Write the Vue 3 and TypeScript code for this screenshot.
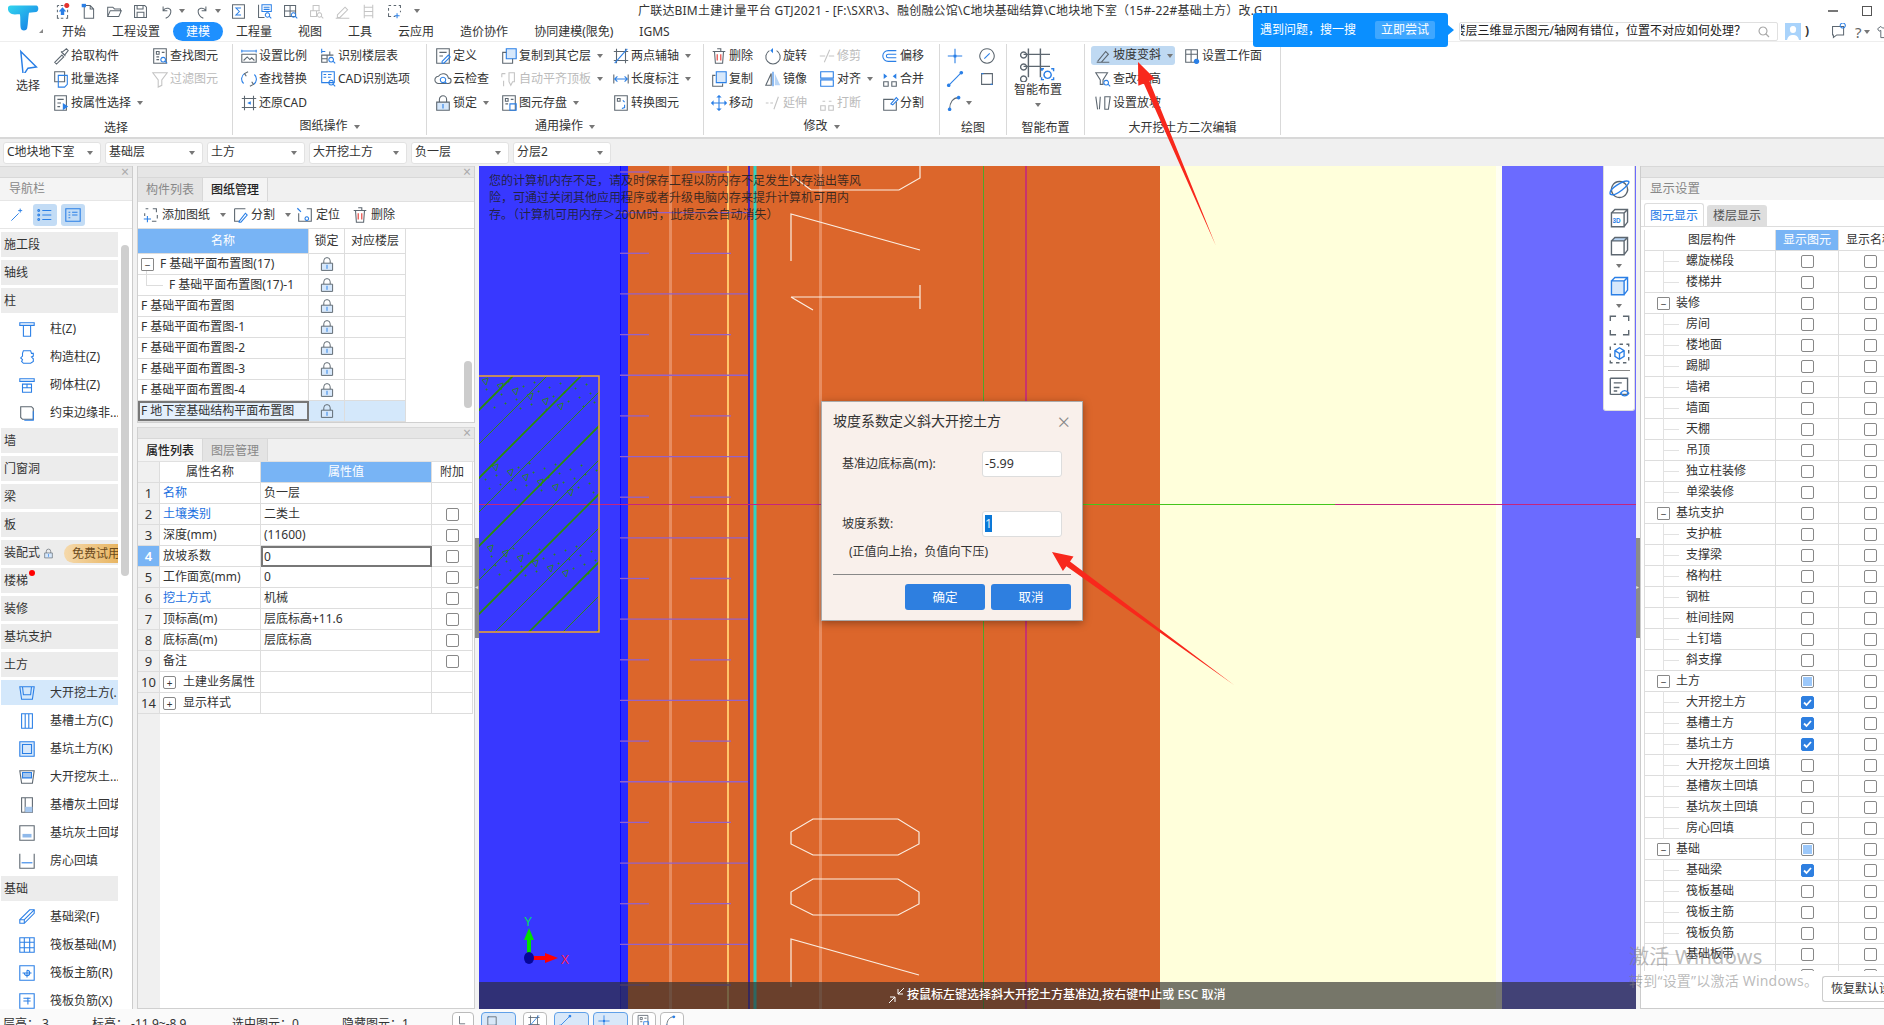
<script setup lang="ts">
import { h } from 'vue';

const D = '#5d6770';
const B = '#2a7fe6';
const G = '#c4c4c4';
const R = '#e5322d';
const Q: [string, string] = ['M13.5 11.5a2.6 2.6 0 1 0 .01 0zM15.6 15.8l2.4 2.4', B];

// 图标路径，颜色前带 = 的是填充
const icons: Record<string, [string, string][]> = {
  upload: [['M4 3h2M8 3h3M14 3h2v2M16 8v3M16 14v4h-2M11 18H8M6 18H4v-4M4 11V8M4 5V3', D], ['M10 5l4.5 5H12v4H8v-4H5.5z', '=' + B], ['M15 0a3 3 0 1 0 .01 0z', '=' + R]],
  newf: [['M5 3h7l4 4v11H5zM12 3v4h4', D], ['M2 1h5v4H2z', '=' + B]],
  open: [['M2 16V5h6l2 2h7v3M2 16l3-7h13l-3 7z', D]],
  save: [['M3 3h12l2 2v12H3zM6 3v4h7V3M6 17v-6h8v6', D]],
  undo: [['M6 9C9 4 16 6 15 11s-4 6-6 7M6 4v5h5', D]],
  redo: [['M14 9C11 4 4 6 5 11s4 6 6 7M14 4v5H9', D]],
  sigma: [['M3 2h14v16H3z', D], ['M13 6H7l4 4-4 4h6', B]],
  chartq: [['M3 2v15h7', D], ['M7 2h11v8H7zM9 5h7M9 7.5h7', B], Q],
  gridq: [['M3 3h13v13H3zM3 9.5h13M9.5 3v13', D], Q],
  gridg: [['M6 3h7v6H6zM3 9h7v7H3zM10 9h4M6 3v6', G], ['M13.5 11.5a2.6 2.6 0 1 0 .01 0zM15.6 15.8l2.4 2.4', G]],
  peng: [['M4 14l9-9 3 3-9 9H4zM2 18h16', G]],
  colg: [['M5 2v16M15 2v16M5 5h10M5 10h10M5 15h10', G]],
  frame: [['M3 3h3M9 3h3M15 3h2v3M17 9v2M3 6v3M3 12v4h3M9 16h2', D], ['M13 12v6M10 15h6', B]],
  arrow: [['M4 2l13 13-7 1-4 6z', B]],
  pick: [['M3 17l8-8 2 2-8 8zM11 6l5-4 2 2-4 5M10 5l5 5', D]],
  batch: [['M3 2h11v11H3z', D], ['M7 6h10v10l-3 3H7z', B]],
  attr: [['M3 2h13v16H3zM6 6h7M6 10h4M6 14h3', D], ['M12 10l6 4-6 4z', '=' + B]],
  findel: [['M3 2h14v16H3zM6 5h3v3H6zM12 6h3M6 11h3M6 14h3', D], Q],
  filter: [['M2 3h16l-6 8v6l-4 2v-8z', G]],
  scale: [['M2 3v3M18 3v3M2 4.500h16', B], ['M2 8h16v9H2zM4 15l4-4 3 3 2-2 3 3', D]],
  floorq: [['M3 2v5M3 5h4', B], ['M3 9h6v8H3zM9 9h7M12 5v4M3 13h6', D], Q],
  replace: [['M5 4a7 7 0 0 0-1 11M15 16a7 7 0 0 0 1-11', B], ['M9 2L5 4l2 3M11 18l4-2-2-3', D]],
  cad: [['M3 2h14v12H3z', B], ['M5 5h3M5 8h3M10 5h4M10 8h3', B], Q],
  restore: [['M2 5h16M2 15h16M5 2v16M15 2v16', D], ['M12 8l-4 2 4 2z', '=' + B]],
  define: [['M3 2h14v16H3zM6 6h8M6 10h4', D], ['M9 16l7-7 2 2-7 7H9z', B]],
  cloud: [['M5 15a4 4 0 0 1 0-8 6 6 0 0 1 11 2 3 3 0 0 1 0 6z', D], ['M10 8a3 3 0 1 0 .01 0zM12 13l2 2', B]],
  lock: [['M6 9V6a4 4 0 0 1 8 0v3', D], ['M3 9h14v9H3z', '=#d7e8fb'], ['M3 9h14v9H3z', D], ['M10 11v5', B]],
  copyf: [['M7 2h11v11H7z', '=#d7e8fb'], ['M7 2h11v11H7z', B], ['M7 6H3v12h11v-5', D]],
  alignt: [['M2 4h4M2 4v4M4 12v6', G], ['M10 3h6v10h-2l-2 4-2-4z', G]],
  store: [['M3 2h14v16H3zM6 5h3v3H6zM12 6h3M6 11h3', D], ['M11 11h7v7h-7z', B]],
  twop: [['M5 2v16M15 2v16M2 5h16M2 15h16', D], ['M3 18L17 2', B]],
  len: [['M2 5v10M18 5v10', D], ['M3 10h14M6 7l-3 3 3 3M14 7l3 3-3 3', B]],
  conv: [['M3 2h14v16H3zM6 5h3v3H6z', D], ['M12 7l2 2M14 12v3l-3 1', B]],
  del: [['M3 5h14M8 2h4v3M5 5l1 13h8l1-13', D], ['M8 8v7M12 8v7', R]],
  rotate: [['M6 4a8 8 0 1 0 8 0', D], ['M10 1l-3 3 3 3', '=' + B]],
  trim: [['M2 10h6M12 10h6M13 3L7 17', G]],
  offset: [['M17 4H8a6 6 0 0 0 0 12h9M17 8H8a2 2 0 0 0 0 4h9', B]],
  copy: [['M7 2h11v12H7z', '=#d7e8fb'], ['M7 2h11v12H7z', B], ['M6 6H3v12h11v-3', D]],
  mirror: [['M10 2v16', B], ['M8 4L2 17h6z', D], ['M12 4l6 13h-6z', '=#b7d4f5']],
  align: [['M3 2h14v7H3z', B], ['M3 11h14v7H3z', B]],
  merge: [['M3 13h5v5H3zM12 13h5v5h-5z', D], ['M3 4l4 3-4 3zM17 4l-4 3 4 3z', '=' + B]],
  move: [['M10 2v16M2 10h16', B], ['M10 1l-3 3h6zM10 19l-3-3h6zM1 10l3-3v6zM19 10l-3-3v6z', '=' + B]],
  extend: [['M2 10h3M7 10h3M16 3l-5 14', G]],
  brk: [['M3 13h5v5H3zM12 13h5v5h-5zM5 8h3M12 8h3', G]],
  split: [['M14 6H3v12h14V9', D], ['M11 11l6-7 2 2-6 6z', B]],
  point: [['M10 2v6M10 12v6M2 10h6M12 10h6', B], ['M10 8a2 2 0 1 0 .01 0z', '=' + B]],
  gauge: [['M10 2a8 8 0 1 0 .01 0z', D], ['M7 13l6-6', B]],
  line: [['M3 17L17 3', B], ['M3 15a2 2 0 1 0 .01 0zM17 1a2 2 0 1 0 .01 0z', '=' + B]],
  rect: [['M4 4h12v12H4z', D], ['M4 4h2M14 16h2', B]],
  arc: [['M4 17C4 9 8 4 14 4', D], ['M14 2a2 2 0 1 0 .01 0zM4 15a2 2 0 1 0 .01 0z', '=' + B]],
  smart: [['M7 2v24M17 2v24M3 7h22M3 17h22', D], ['M3 5a2.500 2.500 0 1 0 .01 0zM3 15a2.500 2.500 0 1 0 .01 0zM3 25a2.500 2.500 0 1 0 .01 0z', D], ['M19 20h-1v-1h2M26 19h2v2M28 26v2h-2M20 28h-2v-2', B], ['M23 21a3 3 0 1 0 .01 0z', B]],
  slope: [['M3 17h14M4 16l9-11 3 3-8 9', D]],
  work: [['M3 3h13v14H3zM3 8h13M9 3v14', D], ['M15 13a3 3 0 1 0 .01 0z', '=' + B]],
  hgt: [['M2 3h13l-5 8v5H7v-5z', D], Q],
  grade: [['M2 3l2 14M7 3l-1 14M12 3h6l-2 14h-4z', D]],
  addd: [['M4 3h3M12 3h4v4M17 10v4M16 17h-5M3 8v3', D], ['M6 11v7M2 14.500h8', B]],
  splitd: [['M4 3h12M4 3v14h6', D], ['M9 17l7-9 2 2-7 8H9z', B]],
  locate: [['M12 3h5v14H3V8', D], ['M2 2l4 4-1 1-4-4z', '=' + B], ['M12 12a2 2 0 1 0 .01 0z', B]],
  wand: [['M3 17L12 8', B], ['M14 2v5M11.500 4.500h5', B]],
  tlist: [['M3 4a1 1 0 1 0 .01 0zM3 9a1 1 0 1 0 .01 0zM3 14a1 1 0 1 0 .01 0zM7 5h10M7 10h10M7 15h10', B]],
  tcard: [['M2 3h16v14H2zM5 7h2M9 7h6M5 10h2M9 10h6M5 13h2', B]],
  nz: [['M2 3h16v3H2zM4 6h12M6 6v12h8V6', B]],
  ngz: [['M6 3h8l1 3h2v3l-2 1 2 2v3l-3 2H6l-2-2 1-2-2-2 2-2V6z', B]],
  nqz: [['M2 3h16v3H2zM4 6h12M5 9h10v9H5zM5 13h10M10 9v4', B]],
  nby: [['M3 3h12l2 2v12H5l-2-2z', D], ['M17 8v10H7', B]],
  nsoil: [['M2 3h16l-2 14H4zM5 3l1 9h8l1-9', B]],
  ncao: [['M4 2h12v16H4zM8 2v16M12 2v16', B]],
  nkeng: [['M2 2h16v16H2z', '=#d7e8fb'], ['M2 2h16v16H2z', B], ['M5 5h10v10H5z', B]],
  nash: [['M2 3h16l-2 14H4z', D], ['M5 5h10v6H5z', '=#a7c8ef'], ['M5 5h10v6H5z', B]],
  nash2: [['M4 2h12v16H4zM8 2v16', D], ['M8 12h8v6H8z', '=#a7c8ef']],
  nash3: [['M2 2h16v16H2z', D], ['M5 11h10v4H5z', '=#8fb9ea']],
  nfang: [['M2 2v16h16V2', D], ['M4 12h12', B]],
  nbeam: [['M2 13l11-11h5v4L7 17H2z', B], ['M2 13h5v4M7 13L18 2', B]],
  nraft: [['M2 2h16v16H2zM2 7h16M2 13h16M7 2v16M13 2v16', B]],
  nbar: [['M2 2h16v16H2z', B], ['M5 10h10M10 7a3 3 0 1 1-3 3M10 7v8', B]],
  nbar2: [['M2 2h16v16H2z', B], ['M6 7h8M6 10h8M11 6v8', B]],
  orbit: [['M10 3a7 7 0 1 0 .01 0z', D], ['M2 14C0 10 14 1 18 3c2 2-12 14-16 11z', B]],
  cube3d: [['M3 6h11v12H3zM3 6l3-3h11v11l-3 4M14 6l3-3', D]],
  cubet: [['M3 6l3-3h11l-3 3z', '=#b7d4f5'], ['M3 6h11v12H3zM3 6l3-3h11v11l-3 4M14 6l3-3', D]],
  cubeb: [['M3 6h11v12H3z', '=#d7e8fb'], ['M3 6h11v12H3zM3 6l3-3h11v11l-3 4M14 6l3-3', B]],
  corners: [['M2 6V2h5M13 2h5v4M18 14v4h-5M7 18H2v-4', D]],
  boxd: [['M5 2h2M10 2h3M16 2h2v2M18 7v3M18 13v3M16 18h-3M10 18H7M4 18H2v-2M2 13v-3M2 7V4', D], ['M10 5l4 2.500v5L10 15l-4-2.500v-5zM6 7.500l4 2.500 4-2.500M10 10v5', B]],
  listeye: [['M2 2h15v14H2M2 16V2M5 6h7M5 10h5M5 13h3', D], ['M11 15c2-3 5-3 7 0-2 3-5 3-7 0z', B]],
  chat: [['M3 4h13v10H8l-4 3v-3H3z', D], ['M15 0a3 3 0 1 0 .01 0z', B]],
  shirt: [['M6 3l-4 3 2 3 2-1v9h8V8l2 1 2-3-4-3-2 2H8z', D]],
  sl: [['M5 3v11h8', D]],
};

const Ico = (props: { n: string; s?: number; vb?: number }) => {
  const size = props.s ?? 18;
  const vb = props.vb ?? 20;
  const kids = (icons[props.n] ?? []).map(([d, c]) =>
    c[0] === '='
      ? h('path', { d, fill: c.slice(1) })
      : h('path', { d, fill: 'none', stroke: c, 'stroke-width': 1.2 })
  );
  if (props.n === 'cube3d') {
    kids.push(h('text', { x: 4, y: 15, 'font-size': 5.5, 'font-weight': 700, fill: B, 'font-family': 'Liberation Sans, sans-serif' }, '3D'));
  }
  return h('svg', { class: 'ico', width: size, height: size, viewBox: `0 0 ${vb} ${vb}` }, kids);
};

const qa = ['upload', 'newf', 'open', 'save', 'undo', 'redo', 'sigma', 'chartq', 'gridq', 'gridg', 'peng', 'colg', 'frame'];
const tabs = ['开始', '工程设置', '建模', '工程量', '视图', '工具', '云应用', '造价协作', '协同建模(限免)', 'IGMS'];

interface RItem { t: string; i: string; off?: boolean; car?: boolean; on?: boolean }
const it = (t: string, i: string, opt: Partial<RItem> = {}): RItem => ({ t, i, ...opt });

const gSel: RItem[][] = [
  [it('拾取构件', 'pick'), it('批量选择', 'batch'), it('按属性选择', 'attr', { car: true })],
  [it('查找图元', 'findel'), it('过滤图元', 'filter', { off: true })],
];
const gDwg: RItem[][] = [
  [it('设置比例', 'scale'), it('查找替换', 'replace'), it('还原CAD', 'restore')],
  [it('识别楼层表', 'floorq'), it('CAD识别选项', 'cad')],
];
const gCom: RItem[][] = [
  [it('定义', 'define'), it('云检查', 'cloud'), it('锁定', 'lock', { car: true })],
  [it('复制到其它层', 'copyf', { car: true }), it('自动平齐顶板', 'alignt', { off: true, car: true }), it('图元存盘', 'store', { car: true })],
  [it('两点辅轴', 'twop', { car: true }), it('长度标注', 'len', { car: true }), it('转换图元', 'conv')],
];
const gMod: RItem[][] = [
  [it('删除', 'del'), it('复制', 'copy'), it('移动', 'move')],
  [it('旋转', 'rotate'), it('镜像', 'mirror'), it('延伸', 'extend', { off: true })],
  [it('修剪', 'trim', { off: true }), it('对齐', 'align', { car: true }), it('打断', 'brk', { off: true })],
  [it('偏移', 'offset'), it('合并', 'merge'), it('分割', 'split')],
];
const gEdit: RItem[][] = [
  [it('坡度变斜', 'slope', { car: true, on: true }), it('查改标高', 'hgt'), it('设置放坡', 'grade')],
  [it('设置工作面', 'work')],
];
const selects = ['C地块地下室', '基础层', '土方', '大开挖土方', '负一层', '分层2'];

interface Nav { t: string; i?: string; on?: boolean }
const nav: Nav[] = [
  { t: '施工段' }, { t: '轴线' }, { t: '柱' },
  { t: '柱(Z)', i: 'nz' }, { t: '构造柱(Z)', i: 'ngz' }, { t: '砌体柱(Z)', i: 'nqz' }, { t: '约束边缘非...', i: 'nby' },
  { t: '墙' }, { t: '门窗洞' }, { t: '梁' }, { t: '板' }, { t: '装配式' }, { t: '楼梯' }, { t: '装修' }, { t: '基坑支护' }, { t: '土方' },
  { t: '大开挖土方(.', i: 'nsoil', on: true }, { t: '基槽土方(C)', i: 'ncao' }, { t: '基坑土方(K)', i: 'nkeng' },
  { t: '大开挖灰土...', i: 'nash' }, { t: '基槽灰土回填', i: 'nash2' }, { t: '基坑灰土回填', i: 'nash3' }, { t: '房心回填', i: 'nfang' },
  { t: '基础' }, { t: '基础梁(F)', i: 'nbeam' }, { t: '筏板基础(M)', i: 'nraft' }, { t: '筏板主筋(R)', i: 'nbar' }, { t: '筏板负筋(X)', i: 'nbar2' },
];

const dwg = ['F 基础平面布置图', 'F 基础平面布置图-1', 'F 基础平面布置图-2', 'F 基础平面布置图-3', 'F 基础平面布置图-4'];

interface Prop { n: string; k: string; v: string; link?: boolean; box?: boolean; add?: boolean; cur?: boolean }
const props2: Prop[] = [
  { n: '1', k: '名称', v: '负一层', link: true },
  { n: '2', k: '土壤类别', v: '二类土', link: true, box: true },
  { n: '3', k: '深度(mm)', v: '(11600)', box: true },
  { n: '4', k: '放坡系数', v: '0', box: true, cur: true },
  { n: '5', k: '工作面宽(mm)', v: '0', box: true },
  { n: '6', k: '挖土方式', v: '机械', link: true, box: true },
  { n: '7', k: '顶标高(m)', v: '层底标高+11.6', box: true },
  { n: '8', k: '底标高(m)', v: '层底标高', box: true },
  { n: '9', k: '备注', v: '', box: true },
  { n: '10', k: '土建业务属性', v: '', add: true },
  { n: '14', k: '显示样式', v: '', add: true },
];

// 0 未选 1 选中 2 半选
const tree: [string, number, number][] = [
  ['螺旋梯段', 1, 0], ['楼梯井', 1, 0], ['装修', 0, 0], ['房间', 1, 0], ['楼地面', 1, 0], ['踢脚', 1, 0], ['墙裙', 1, 0], ['墙面', 1, 0],
  ['天棚', 1, 0], ['吊顶', 1, 0], ['独立柱装修', 1, 0], ['单梁装修', 1, 0], ['基坑支护', 0, 0], ['支护桩', 1, 0], ['支撑梁', 1, 0],
  ['格构柱', 1, 0], ['钢桩', 1, 0], ['桩间挂网', 1, 0], ['土钉墙', 1, 0], ['斜支撑', 1, 0], ['土方', 0, 2], ['大开挖土方', 1, 1],
  ['基槽土方', 1, 1], ['基坑土方', 1, 1], ['大开挖灰土回填', 1, 0], ['基槽灰土回填', 1, 0], ['基坑灰土回填', 1, 0], ['房心回填', 1, 0],
  ['基础', 0, 2], ['基础梁', 1, 1], ['筏板基础', 1, 0], ['筏板主筋', 1, 0], ['筏板负筋', 1, 0], ['基础板带', 1, 0], ['', 1, 0],
];

const floatTools = [
  { i: 'orbit' }, { i: 'cube3d' }, { i: 'cubet', car: true }, { i: 'cubeb', car: true }, { i: 'corners' }, { i: 'boxd' },
];

const statusBtns = [
  { i: 'sl', w: 'w22' },
  { i: 'rect', w: 'w34', act: true, ml: true },
  { i: 'twop', w: 'w24', ml: true },
  { i: 'line', w: 'w34', act: true, ml: true },
  { i: 'point', w: 'w34', act: true },
  { i: 'store', w: 'w24' },
  { i: 'arc', w: 'w24' },
];

// 画布上的水平线，单双交替
const hLines = Array.from({ length: 21 }, (_, k) => ({ y: 172 + 40.65 * k, full: k % 2 === 1 }));
const hatch = Array.from({ length: 14 }, (_, k) => ({ c: 821 + 34 * k, w: k % 2 === 0 ? 1.6 : 0.9 }));
const marks = Array.from({ length: 90 }, (_, k) => ({
  x: 482 + ((k * 47) % 115),
  y: 380 + ((k * 83) % 248),
  big: k % 5 === 0,
}));
</script>

<template>
  <div class="app">
    <header class="head">
      <div class="logo">
        <svg width="31" height="28" viewBox="0 0 34 38" preserveAspectRatio="none">
          <defs>
            <linearGradient id="lg" x1="0" y1="0" x2="1" y2="1">
              <stop offset="0" stop-color="#33d6ee" />
              <stop offset="1" stop-color="#1276e6" />
            </linearGradient>
          </defs>
          <path d="M3 2h28c3 0 3 8 0 9l-8 1c-1 7-1 15-2 21-1 4-6 4-7 0-1-6 0-14-1-19-5 0-9 1-11-2-3-3-3-10 1-10z" fill="url(#lg)" />
        </svg>
        <i class="logo-tri"></i>
      </div>
      <div class="head-main">
        <div class="head-top">
          <div class="qa">
            <div v-for="q in qa" :key="q" class="qa-i">
              <Ico :n="q" :s="17" />
              <i v-if="q === 'undo' || q === 'redo'" class="car"></i>
            </div>
            <i class="car qa-more"></i>
          </div>
          <div class="title">广联达BIM土建计量平台 GTJ2021 - [F:\SXR\3、融创融公馆\C地块基础结算\C地块地下室（15#-22#基础土方）改.GTJ]</div>
          <div class="winbtn">
            <span class="w-min"></span>
            <span class="w-max"></span>
          </div>
        </div>
        <div class="head-tabs">
          <span v-for="t in tabs" :key="t" class="tab" :class="{ on: t === '建模' }">{{ t }}</span>
          <div class="head-right">
            <div class="search">
              <div class="search-t"><span>楼层三维显示图元/轴网有错位，位置不对应如何处理？</span></div>
              <svg width="14" height="14" viewBox="0 0 14 14"><path d="M6 2a4 4 0 1 0 .01 0zM9 9l3 3" fill="none" stroke="#aaa" stroke-width="1.2" /></svg>
            </div>
            <div class="avatar">
              <svg width="16" height="17" viewBox="0 0 16 17"><path d="M8 3a3 3 0 0 1 3 4c0 2-1 3-3 3S5 9 5 7a3 3 0 0 1 3-4zM2 17c1-4 3-5 6-5s5 1 6 5z" fill="#fff" /></svg>
            </div>
            <span class="moon">)</span>
            <Ico class="hr-chat" n="chat" :s="17" />
            <span class="help">?</span>
            <i class="car"></i>
            <Ico class="hr-shirt" n="shirt" :s="16" />
          </div>
        </div>
      </div>
    </header>

    <section class="ribbon">
      <div class="grp g1">
        <div class="cols">
          <div class="pick-big">
            <Ico n="arrow" :s="24" />
            <span>选择</span>
          </div>
          <div v-for="(c, ci) in gSel" :key="ci" class="col" :class="'c1' + ci">
            <div v-for="x in c" :key="x.t" class="rb" :class="{ off: x.off }"><Ico :n="x.i" /><span>{{ x.t }}</span><i v-if="x.car" class="car"></i></div>
          </div>
        </div>
        <div class="gl">选择</div>
      </div>
      <div class="grp g2">
        <div class="cols">
          <div v-for="(c, ci) in gDwg" :key="ci" class="col" :class="'c2' + ci">
            <div v-for="x in c" :key="x.t" class="rb" :class="{ off: x.off }"><Ico :n="x.i" /><span>{{ x.t }}</span><i v-if="x.car" class="car"></i></div>
          </div>
        </div>
        <div class="gl up">图纸操作 <i class="car"></i></div>
      </div>
      <div class="grp g3">
        <div class="cols">
          <div v-for="(c, ci) in gCom" :key="ci" class="col" :class="'c3' + ci">
            <div v-for="x in c" :key="x.t" class="rb" :class="{ off: x.off }"><Ico :n="x.i" /><span>{{ x.t }}</span><i v-if="x.car" class="car"></i></div>
          </div>
        </div>
        <div class="gl up">通用操作 <i class="car"></i></div>
      </div>
      <div class="grp g4">
        <div class="cols">
          <div v-for="(c, ci) in gMod" :key="ci" class="col" :class="'c4' + ci">
            <div v-for="x in c" :key="x.t" class="rb" :class="{ off: x.off }"><Ico :n="x.i" /><span>{{ x.t }}</span><i v-if="x.car" class="car"></i></div>
          </div>
        </div>
        <div class="gl up">修改 <i class="car"></i></div>
      </div>
      <div class="grp g5">
        <div class="draw">
          <Ico n="point" /><Ico n="gauge" /><Ico n="line" /><Ico n="rect" />
          <div class="draw-arc"><Ico n="arc" /><i class="car"></i></div>
        </div>
        <div class="gl">绘图</div>
      </div>
      <div class="grp g6">
        <div class="smart">
          <Ico n="smart" :s="36" :vb="30" />
          <span>智能布置</span>
          <i class="car"></i>
        </div>
        <div class="gl">智能布置</div>
      </div>
      <div class="grp g7">
        <div class="cols">
          <div v-for="(c, ci) in gEdit" :key="ci" class="col" :class="'c7' + ci">
            <div v-for="x in c" :key="x.t" class="rb" :class="{ on: x.on }"><Ico :n="x.i" /><span>{{ x.t }}</span><i v-if="x.car" class="car"></i></div>
          </div>
        </div>
        <div class="gl">大开挖土方二次编辑</div>
      </div>
    </section>

    <div class="bar">
      <div v-for="s in selects" :key="s" class="sel"><span>{{ s }}</span><i class="car"></i></div>
    </div>

    <main class="main">
      <aside class="nav">
        <div class="strip"><span class="x">×</span></div>
        <div class="nav-title">导航栏</div>
        <div class="nav-tools">
          <span class="nt"><Ico n="wand" :s="16" /></span>
          <span class="nt act"><Ico n="tlist" :s="18" /></span>
          <span class="nt act"><Ico n="tcard" :s="18" /></span>
        </div>
        <div class="nav-body">
          <div class="nav-list">
            <template v-for="n in nav" :key="n.t">
              <div v-if="n.i" class="sub" :class="{ on: n.on }"><Ico class="sub-i" :n="n.i" /><span>{{ n.t }}</span></div>
              <div v-else class="sec">
                <span>{{ n.t }}</span>
                <template v-if="n.t === '装配式'">
                  <Ico class="sec-lock" n="lock" :s="11" />
                  <em class="free">免费试用</em>
                </template>
                <b v-if="n.t === '楼梯'" class="dot"></b>
              </div>
            </template>
          </div>
          <div class="nav-sb"></div>
        </div>
      </aside>

      <div class="mid">
        <section class="pane top">
          <div class="strip"><span class="x">×</span></div>
          <div class="ptabs"><span class="pt">构件列表</span><span class="pt on">图纸管理</span></div>
          <div class="ptools">
            <span class="pi"><Ico n="addd" /><span>添加图纸</span><i class="car"></i></span>
            <span class="pi"><Ico n="splitd" /><span>分割</span><i class="car"></i></span>
            <span class="pi"><Ico n="locate" /><span>定位</span></span>
            <span class="pi"><Ico n="del" /><span>删除</span></span>
          </div>
          <div class="dt">
            <div class="dt-r dt-h"><span class="d1 hl">名称</span><span class="d2">锁定</span><span class="d3">对应楼层</span></div>
            <div class="dt-r">
              <span class="d1 left"><i class="mbox">−</i>F 基础平面布置图(17)</span><span class="d2"><Ico n="lock" :s="16" /></span><span class="d3"></span>
            </div>
            <div class="dt-r">
              <span class="d1 left child">F 基础平面布置图(17)-1</span><span class="d2"><Ico n="lock" :s="16" /></span><span class="d3"></span>
            </div>
            <div v-for="d in dwg" :key="d" class="dt-r">
              <span class="d1 left">{{ d }}</span><span class="d2"><Ico n="lock" :s="16" /></span><span class="d3"></span>
            </div>
            <div class="dt-r sel-r">
              <span class="d1 left cur">F 地下室基础结构平面布置图</span><span class="d2"><Ico n="lock" :s="16" /></span><span class="d3"></span>
            </div>
          </div>
          <div class="dt-sb"></div>
        </section>
        <section class="pane bot">
          <div class="strip"><span class="x">×</span></div>
          <div class="ptabs"><span class="pt on">属性列表</span><span class="pt">图层管理</span></div>
          <div class="pg">
            <div class="pg-r pg-h"><span class="p0"></span><span class="p1 ct">属性名称</span><span class="p2 hl">属性值</span><span class="p3 ct">附加</span></div>
            <div v-for="p in props2" :key="p.n" class="pg-r">
              <span class="p0" :class="{ hl: p.cur }">{{ p.n }}</span>
              <span class="p1" :class="{ link: p.link }"><i v-if="p.add" class="pbox">+</i>{{ p.k }}</span>
              <span class="p2" :class="{ cur: p.cur }">{{ p.v }}</span>
              <span class="p3"><i v-if="p.box" class="cb"></i></span>
            </div>
            <div class="pg-rest"></div>
          </div>
        </section>
      </div>

      <div class="gap"><span class="grip">◂</span></div>

      <div class="canvas">
        <svg class="draw-area" width="1157" height="843" viewBox="479 166 1157 843">
          <defs>
            <clipPath id="hc"><rect x="479" y="376" width="120" height="256" /></clipPath>
          </defs>
          <rect x="479" y="166" width="150" height="843" fill="#3838ff" />
          <rect x="620" y="166" width="1.500" height="843" fill="#0808ff" />
          <rect x="621" y="166" width="7" height="843" fill="#2a2aff" />
          <rect x="628" y="166" width="532" height="843" fill="#dc662b" />
          <rect x="1160" y="166" width="336" height="843" fill="#ffffdb" />
          <rect x="1496" y="166" width="6" height="843" fill="#fffff2" />
          <rect x="1502" y="166" width="134" height="843" fill="#6b6bff" />

          <rect x="669" y="166" width="3" height="843" fill="#e88c5f" />
          <rect x="819" y="166" width="3" height="843" fill="#e88c5f" />
          <rect x="727" y="166" width="2" height="843" fill="#ffc66a" />
          <rect x="748" y="166" width="2" height="843" fill="#4a22b5" />
          <rect x="753.500" y="166" width="3" height="843" fill="#2fd3c5" />
          <rect x="983" y="166" width="1" height="843" fill="#4fa52a" />
          <rect x="1025" y="166" width="2" height="843" fill="#c8336e" />

          <g v-for="l in hLines" :key="l.y" stroke="#9462c9" stroke-width="1.300">
            <line v-if="l.full" x1="620" :y1="l.y" x2="748" :y2="l.y" />
            <template v-else>
              <line x1="620" :y1="l.y" x2="649" :y2="l.y" />
              <line x1="690" :y1="l.y" x2="731" :y2="l.y" />
            </template>
          </g>

          <line x1="479" y1="504.500" x2="822" y2="504.500" stroke="#c4267e" />
          <line x1="822" y1="504.500" x2="1335" y2="504.500" stroke="#43c61c" />
          <line x1="1335" y1="504.500" x2="1636" y2="504.500" stroke="#c4267e" />

          <g fill="none" stroke="#fbeee2" stroke-width="1.200">
            <path d="M791 166v9l20 15h88l21-12v-12" />
            <path d="M791 261v-47l129 36" />
            <path d="M791 297h129M920 285v24M791 297l22 13" />
            <path d="M813 819h85l21 13v12l-21 11h-85l-22-11v-12z" />
            <path d="M813 879h85l21 13v12l-21 11h-85l-22-11v-12z" />
            <path d="M791 987v-48l128 36" />
          </g>

          <g clip-path="url(#hc)">
            <line v-for="l in hatch" :key="l.c" :x1="l.c - 376" y1="376" :x2="l.c - 640" y2="640" stroke="#2c8f00" :stroke-width="l.w" />
            <g fill="none" stroke="#2c8f00" stroke-width="0.800">
              <path v-for="(m, mi) in marks" :key="mi" :d="m.big ? `M${m.x} ${m.y}l6-2-2 7z` : `M${m.x} ${m.y}h1v1h-1z`" />
            </g>
          </g>
          <path d="M479 376h120v256H479" fill="none" stroke="#f0a52e" stroke-width="1.500" />

          <line x1="529" y1="958" x2="529" y2="938" stroke="#00e000" stroke-width="4" />
          <path d="M529 928l5 12h-10z" fill="#00e000" />
          <line x1="529" y1="958" x2="546" y2="958" stroke="#ff0000" stroke-width="4" />
          <path d="M558 958l-13 5v-10z" fill="#ff0000" />
          <ellipse cx="529" cy="958" rx="5" ry="6" fill="#06069a" />
          <text x="524" y="926" class="ax-y">Y</text>
          <text x="561" y="964" class="ax-x">X</text>
        </svg>

        <div class="warn">您的计算机内存不足，请及时保存工程以防内存不足发生内存溢出等风险，可通过关闭其他应用程序或者升级电脑内存来提升计算机可用内存。（计算机可用内存＞200M时，此提示会自动消失）</div>

        <div class="float">
          <template v-for="f in floatTools" :key="f.i">
            <Ico :n="f.i" :s="23" />
            <i v-if="f.car" class="car fcar"></i>
          </template>
          <span class="fline"></span>
          <Ico n="listeye" :s="23" />
        </div>

        <div class="dlg">
          <div class="dlg-t"><span>坡度系数定义斜大开挖土方</span><span class="dlg-x">×</span></div>
          <div class="dlg-f">
            <label>基准边底标高(m):</label>
            <div class="inp">-5.99</div>
          </div>
          <div class="dlg-f f2">
            <label>坡度系数:</label>
            <div class="inp"><mark>1</mark></div>
          </div>
          <div class="dlg-h">(正值向上抬，负值向下压)</div>
          <div class="dlg-b">
            <button>确定</button>
            <button>取消</button>
          </div>
        </div>

        <div class="tip">
          <svg width="17" height="17" viewBox="0 0 17 17"><path d="M16 1l-6 6M10 2v5h5M1 16l6-6M7 15v-5H2" fill="none" stroke="#fff" stroke-width="1" /></svg>
          <span>按鼠标左键选择斜大开挖土方基准边,按右键中止或 ESC 取消</span>
        </div>
      </div>

      <div class="gap"><span class="grip">▸</span></div>

      <aside class="side">
        <div class="strip"></div>
        <div class="side-title">显示设置</div>
        <div class="stabs"><span class="st on">图元显示</span><span class="st">楼层显示</span></div>
        <div class="tt">
          <div class="tt-r tt-h"><span class="t1">图层构件</span><span class="t2 hl">显示图元</span><span class="t3">显示名称</span></div>
          <div v-for="(r, i) in tree" :key="i" class="tt-r">
            <span class="t1" :class="r[1] ? 'leaf' : 'grp-n'"><i v-if="!r[1]" class="mbox small">−</i>{{ r[0] }}</span>
            <span class="t2">
              <i class="cb" :class="{ chk: r[2] === 1, half: r[2] === 2 }">
                <svg v-if="r[2] === 1" width="11" height="11" viewBox="0 0 11 11"><path d="M2 5.500l2.500 2.500L9 3" fill="none" stroke="#fff" stroke-width="1.800" /></svg>
              </i>
            </span>
            <span class="t3"><i class="cb"></i></span>
          </div>
        </div>
        <div class="side-foot"><button class="reset">恢复默认设置</button></div>
      </aside>
    </main>

    <footer class="status">
      <span class="s1">层高： 3</span>
      <span class="s2">标高： -11.9~-8.9</span>
      <span class="s3">选中图元：0</span>
      <span class="s4">隐藏图元：1</span>
      <div class="sbtns">
        <span v-for="(b, i) in statusBtns" :key="i" class="sb" :class="[b.w, { act: b.act, ml: b.ml }]"><Ico :n="b.i" :s="14" /></span>
      </div>
    </footer>

    <!-- 截图上的批注和激活水印，盖在所有内容上面 -->
    <div class="notify">
      <span>遇到问题，搜一搜</span>
      <b>立即尝试</b>
    </div>
    <svg class="redmarks" width="1884" height="1025" viewBox="0 0 1884 1025">
      <path d="M1216 246L1149.400 81l5.500-2.300L1138 62l.3 23.700 5.500-2.300z" fill="#f8281c" />
      <path d="M1234 685L1070 561.400l3.500-4.900L1052 552l10.900 19.100 3.500-4.900z" fill="#f8281c" />
    </svg>
    <div class="wm">
      <div class="wm1">激活 Windows</div>
      <div class="wm2">转到“设置”以激活 Windows。</div>
    </div>
  </div>
</template>

<style>
html,
body {
  margin: 0;
  overflow: hidden;
  background: #fff;
}
</style>

<style scoped>
.app {
  position: relative;
  display: flex;
  flex-direction: column;
  width: 1884px;
  height: 1025px;
  overflow: hidden;
  font: 12px/1.2 "Noto Sans", "Noto Sans CJK SC", sans-serif;
  color: #333;
  background: #fafafa;
}
.ico {
  display: block;
  flex: none;
}
.car {
  display: inline-block;
  width: 0;
  height: 0;
  border-left: 3px solid transparent;
  border-right: 3px solid transparent;
  border-top: 4px solid #777;
  flex: none;
}

/* 标题栏 */
.head {
  display: flex;
  height: 41px;
  background: #fff;
  flex: none;
}
.logo {
  position: relative;
  width: 49px;
  padding: 4px 0 0 8px;
  box-sizing: border-box;
  flex: none;
}
.logo-tri {
  position: absolute;
  left: 39px;
  top: 29px;
  border-left: 4px solid transparent;
  border-bottom: 4px solid #888;
}
.head-main {
  flex: 1;
  min-width: 0;
}
.head-top {
  display: flex;
  align-items: center;
  height: 22px;
}
.qa {
  display: flex;
  align-items: center;
  width: 589px;
  padding-left: 5px;
  box-sizing: border-box;
  flex: none;
  gap: 9px;
}
.qa-i {
  display: flex;
  align-items: center;
  gap: 4px;
}
.qa-more {
  margin-left: 2px;
}
.title {
  white-space: nowrap;
  letter-spacing: 0.2px;
}
.winbtn {
  margin-left: auto;
  display: flex;
  align-items: center;
  gap: 24px;
  padding-right: 12px;
}
.w-min {
  width: 10px;
  height: 2px;
  background: #777;
}
.w-max {
  width: 8px;
  height: 8px;
  border: 1px solid #555;
}
.head-tabs {
  display: flex;
  align-items: center;
  height: 19px;
}
.tab {
  padding: 0 13px;
  height: 19px;
  line-height: 19px;
  white-space: nowrap;
  flex: none;
}
.tab.on {
  background: #1e90ff;
  color: #fff;
  border-radius: 10px;
}
.head-right {
  margin-left: auto;
  margin-right: -8px;
  display: flex;
  align-items: center;
  flex: none;
}
.search {
  display: flex;
  align-items: center;
  width: 319px;
  height: 19px;
  box-sizing: border-box;
  border: 1px solid #e0e0e0;
  border-radius: 2px;
  padding: 0 6px 0 1px;
}
.search-t {
  flex: 1;
  min-width: 0;
  overflow: hidden;
  display: flex;
  justify-content: flex-end;
  white-space: nowrap;
  padding-right: 11px;
  color: #222;
}
.avatar {
  width: 16px;
  height: 17px;
  margin-left: 7px;
  background: #a9d3fb;
}
.moon {
  margin-left: 4px;
  font-weight: 700;
  width: 8px;
}
.hr-chat {
  margin: 0 8px 0 17px;
}
.help {
  font-size: 15px;
  color: #666;
  width: 8px;
  margin-right: 1px;
}
.hr-shirt {
  margin-left: 6px;
}

/* 功能区 */
.ribbon {
  display: flex;
  height: 98px;
  flex: none;
  background: #fff;
  border-top: 1px solid #eee;
  border-bottom: 2px solid #d8d8d8;
  box-sizing: border-box;
}
.grp {
  position: relative;
  display: flex;
  flex-direction: column;
  box-sizing: border-box;
  flex: none;
  margin: 2px 0 3px;
  border-right: 1px solid #d9d9d9;
  height: 91px;
}
.g1 { width: 233px; }
.g2 { width: 194px; padding-left: 7px; }
.g3 { width: 277px; padding-left: 7px; }
.g4 { width: 236px; padding-left: 6px; }
.g5 { width: 67px; }
.g6 { width: 78px; }
.g7 { width: 196px; padding-left: 6px; }
.cols {
  display: flex;
  height: 71px;
}
.col {
  display: flex;
  flex-direction: column;
  flex: none;
}
.c10 { width: 99px; }
.c20 { width: 79px; }
.c30 { width: 66px; }
.c31 { width: 112px; }
.c40, .c41 { width: 54px; }
.c42 { width: 63px; }
.c70 { width: 89px; }
.rb {
  display: flex;
  align-items: center;
  height: 23.600px;
  gap: 1px;
  white-space: nowrap;
  flex: none;
}
.rb .car {
  margin-left: 5px;
}
.rb.off {
  color: #bbb;
}
.c70 .rb, .c71 .rb {
  padding-left: 3px;
}
.rb.on {
  background: #bfd9f2;
  border-radius: 3px;
  height: 19px;
  margin: 2px 0 2.600px;
  width: 84px;
  box-sizing: border-box;
}
.pick-big {
  width: 52px;
  flex: none;
  display: flex;
  flex-direction: column;
  align-items: center;
  padding: 5px 0 0 4px;
  box-sizing: border-box;
  gap: 6px;
}
.gl {
  position: absolute;
  left: 0;
  right: 0;
  bottom: -3px;
  height: 20px;
  line-height: 20px;
  text-align: center;
  white-space: nowrap;
}
.gl.up {
  bottom: -1px;
}
.gl .car {
  margin-left: 3px;
  vertical-align: middle;
}
.draw {
  display: grid;
  grid-template-columns: 32px 32px;
  grid-auto-rows: 23.600px;
  align-items: center;
  padding-left: 6px;
}
.draw-arc {
  display: flex;
  align-items: center;
  gap: 2px;
}
.smart {
  display: flex;
  flex-direction: column;
  align-items: center;
  width: 62px;
  padding-left: 0;
  gap: 1px;
}
.smart .ico {
  margin-top: 2px;
}
.smart .car {
  margin-top: 5px;
}

/* 选择条 */
.bar {
  display: flex;
  align-items: center;
  gap: 4px;
  height: 27px;
  padding-left: 3px;
  background: #f0f0f0;
  flex: none;
}
.sel {
  display: flex;
  align-items: center;
  justify-content: space-between;
  width: 98px;
  height: 22px;
  padding: 0 7px 0 3px;
  background: #fff;
  border: 1px solid #e2e2e2;
  border-radius: 3px;
  box-sizing: border-box;
}

/* 主区域 */
.main {
  display: flex;
  height: 843px;
  flex: none;
  background: #f2f2f2;
  overflow: hidden;
}
.strip {
  position: relative;
  height: 12px;
  background: #e6e6e6;
  border-top: 1px solid #d8d8d8;
  border-bottom: 1px solid #d8d8d8;
  flex: none;
  box-sizing: border-box;
}
.x {
  position: absolute;
  right: 3px;
  top: -3px;
  font-size: 14px;
  line-height: 16px;
  color: #aaa;
}

.nav {
  display: flex;
  flex-direction: column;
  width: 133px;
  background: #fff;
  border-right: 1px solid #ccc;
  box-sizing: border-box;
  flex: none;
}
.nav-title {
  height: 22px;
  line-height: 22px;
  padding-left: 9px;
  color: #888;
  background: #f4f4f4;
  border-bottom: 1px solid #e6e6e6;
  box-sizing: content-box;
}
.nav-tools {
  display: flex;
  gap: 4px;
  height: 27px;
  padding-left: 5px;
  align-items: center;
  border-bottom: 1px solid #e6e6e6;
  flex: none;
}
.nt {
  display: flex;
  align-items: center;
  justify-content: center;
  width: 24px;
  height: 22px;
  border-radius: 3px;
}
.nt.act {
  background: #c3dcf5;
}
.nav-body {
  position: relative;
  flex: 1;
  min-height: 0;
  overflow: hidden;
  padding: 3px 0 0 1px;
}
.nav-list {
  width: 117px;
  overflow: hidden;
}
.sec {
  position: relative;
  display: flex;
  align-items: center;
  height: 25px;
  box-sizing: border-box;
  margin-bottom: 3px;
  padding: 1px 0 0 3px;
  background: #ececec;
  white-space: nowrap;
}
.sec-lock {
  margin-left: 3px;
}
.free {
  margin-left: 10px;
  padding: 0 0 0 8px;
  height: 19px;
  line-height: 19px;
  font-style: normal;
  color: #6b4a1c;
  background: linear-gradient(90deg, #f5d9ac, #e8b45f);
  border-radius: 10px 0 0 10px;
  flex: none;
}
.dot {
  position: absolute;
  left: 28px;
  top: 2px;
  width: 6px;
  height: 6px;
  background: #f00;
  border-radius: 50%;
}
.sub {
  display: flex;
  align-items: center;
  height: 25px;
  box-sizing: border-box;
  margin-bottom: 3px;
  padding-top: 1px;
  white-space: nowrap;
  overflow: hidden;
}
.sub.on {
  background: #d4e8fb;
}
.sub-i {
  margin: 0 14px 0 17px;
}
.nav-sb {
  position: absolute;
  left: 121px;
  top: 16px;
  width: 8px;
  height: 331px;
  background: #cfcfcf;
  border-radius: 4px;
}

.mid {
  display: flex;
  flex-direction: column;
  width: 338px;
  margin-left: 4px;
  flex: none;
  gap: 4px;
}
.pane {
  position: relative;
  display: flex;
  flex-direction: column;
  background: #fff;
  border: 1px solid #d0d0d0;
  border-top: 0;
  box-sizing: border-box;
}
.pane.top {
  height: 257px;
}
.pane.bot {
  flex: 1;
  min-height: 0;
}
.ptabs {
  display: flex;
  height: 23px;
  background: #f0f0f0;
  border-bottom: 1px solid #e0e0e0;
  flex: none;
  box-sizing: content-box;
}
.bot .ptabs {
  height: 22px;
}
.pt {
  width: 64px;
  text-align: center;
  line-height: 23px;
  color: #888;
  background: #e4e4e4;
  border-right: 1px solid #d8d8d8;
}
.pt.on {
  background: #f4f4f4;
  color: #222;
  font-weight: 500;
}
.ptools {
  display: flex;
  align-items: center;
  height: 26px;
  padding-left: 4px;
  border-bottom: 1px solid #ddd;
  flex: none;
}
.pi {
  display: flex;
  align-items: center;
  gap: 2px;
  margin-right: 11px;
}
.pi .car {
  margin: 0 -6px 0 8px;
}
.hl {
  background: #78b4f5;
  color: #fff;
}
.dt-r {
  display: flex;
  height: 21px;
  width: 268px;
  box-sizing: border-box;
  border-bottom: 1px solid #ddd;
}
.dt-r > span {
  display: flex;
  align-items: center;
  justify-content: center;
  border-right: 1px solid #ddd;
  box-sizing: border-box;
  white-space: nowrap;
}
.dt-h {
  height: 25px;
}
.d1 { width: 171px; }
.d2 { width: 36px; }
.d3 { width: 61px; }
.dt-r > .left {
  justify-content: flex-start;
  padding: 1px 0 0 3px;
  position: relative;
}
.mbox {
  display: inline-flex;
  align-items: center;
  justify-content: center;
  width: 11px;
  height: 11px;
  margin-right: 6px;
  border: 1px solid #888;
  border-radius: 1px;
  font-style: normal;
  font-size: 10px;
  line-height: 1;
  flex: none;
}
.dt-r > .child {
  padding-left: 31px;
}
.child::before {
  content: "";
  position: absolute;
  left: 8px;
  top: -4px;
  width: 16px;
  height: 14px;
  border-left: 1px solid #ddd;
  border-bottom: 1px solid #ddd;
}
.sel-r {
  background: #d4e8fb;
}
.dt-r > .cur {
  background: #e4f0fc;
  border: 2px solid #777;
  padding-left: 1px;
}
.dt-sb {
  position: absolute;
  right: 2px;
  top: 195px;
  width: 8px;
  height: 47px;
  border-radius: 4px;
  background: #ccc;
}
.pg {
  display: flex;
  flex-direction: column;
  flex: 1;
  min-height: 0;
}
.pg-r {
  display: flex;
  height: 21px;
  box-sizing: border-box;
  flex: none;
}
.pg-r > span {
  display: flex;
  align-items: center;
  box-sizing: border-box;
  height: 21px;
  border-bottom: 1px solid #ddd;
  border-right: 1px solid #ddd;
  padding: 1px 0 0 3px;
  white-space: nowrap;
}
.p0 { width: 22px; background: #f0f0f0; justify-content: center; font-size: 13px; }
.pg-r > .p0 { padding-left: 0; }
.pg-r > .p0.hl { background: #78b4f5; color: #fff; font-weight: 600; }
.p1 { width: 101px; }
.p2 { width: 171px; }
.p3 { width: 41px; justify-content: center; }
.pg-r > .p3 { padding-left: 0; }
.pg-r > .ct, .pg-h > .p2 { justify-content: center; padding-left: 0; }
.link {
  color: #1a6fe0;
}
.pg-r > .cur {
  border: 2px solid #777;
  padding-left: 1px;
}
.pbox {
  display: inline-flex;
  align-items: center;
  justify-content: center;
  width: 11px;
  height: 11px;
  margin: 0 7px 0 0;
  border: 1px solid #888;
  border-radius: 2px;
  font-style: normal;
  font-size: 10px;
  line-height: 1;
}
.pg-rest {
  flex: 1;
  width: 22px;
  background: #f0f0f0;
}
.cb {
  display: flex;
  align-items: center;
  justify-content: center;
  width: 13px;
  height: 13px;
  box-sizing: border-box;
  border: 1px solid #888;
  border-radius: 2px;
  background: #fff;
}
.cb.chk {
  background: #2e7fe0;
  border-color: #2e7fe0;
}
.cb.half {
  background: #9cc8fa;
  outline: 1px solid #fff;
  outline-offset: -2px;
}

.gap {
  position: relative;
  display: flex;
  align-items: center;
  width: 4px;
  flex: none;
}
.grip {
  display: flex;
  align-items: center;
  height: 100px;
  width: 4px;
  overflow: hidden;
  background: #8a8a8a;
  color: #ddd;
  font-size: 6px;
}

/* 画布 */
.canvas {
  position: relative;
  width: 1157px;
  flex: none;
  overflow: hidden;
}
.draw-area {
  position: absolute;
  left: 0;
  top: 0;
}
.ax-y {
  font: 12px "Liberation Sans", sans-serif;
  fill: #00e060;
}
.ax-x {
  font: 12px "Liberation Sans", sans-serif;
  fill: #ff2050;
}
.warn {
  position: absolute;
  left: 10px;
  top: 6px;
  width: 376px;
  line-height: 17px;
  color: rgba(30, 30, 30, 0.85);
}
.float {
  position: absolute;
  right: 1px;
  top: 0;
  width: 32px;
  height: 245px;
  box-sizing: border-box;
  background: #fff;
  border: 1px solid #ddd;
  border-top: 0;
  border-radius: 0 0 3px 3px;
  display: flex;
  flex-direction: column;
  align-items: center;
  padding-top: 12px;
  gap: 5px;
}
.fcar {
  margin: 2px 0 1px;
}
.fline {
  width: 22px;
  height: 1px;
  background: #888;
}
.dlg {
  position: absolute;
  left: 342px;
  top: 235px;
  width: 262px;
  height: 220px;
  box-sizing: border-box;
  padding: 0 11px;
  background: #f9f0eb;
  border: 1px solid #aaa;
  box-shadow: 0 2px 8px rgba(0, 0, 0, 0.35);
}
.dlg-t {
  display: flex;
  justify-content: space-between;
  align-items: center;
  height: 38px;
  font-size: 14px;
  color: #333;
}
.dlg-x {
  font-size: 22px;
  color: #888;
  font-weight: 300;
  margin-right: 1px;
}
.dlg-f {
  display: flex;
  align-items: center;
  height: 26px;
  margin-top: 11px;
  padding-left: 9px;
}
.dlg-f label {
  width: 140px;
}
.f2 {
  margin-top: 34px;
}
.inp {
  width: 80px;
  height: 26px;
  box-sizing: border-box;
  background: #fff;
  border: 1px solid #ddd;
  border-radius: 3px;
  padding-left: 2px;
  line-height: 24px;
  font-size: 12.500px;
}
.inp mark {
  background: #0a78d7;
  color: #dceeff;
}
.dlg-h {
  padding: 7px 0 0 16px;
  height: 38px;
  box-sizing: border-box;
  border-bottom: 1px solid #888;
  line-height: 16px;
}
.dlg-b {
  display: flex;
  justify-content: flex-end;
  gap: 6px;
  padding-top: 9px;
}
.dlg-b button {
  width: 80px;
  height: 26px;
  border: 0;
  border-radius: 3px;
  background: #2e7fe0;
  color: #fff;
  font: inherit;
  font-size: 12.500px;
}
.tip {
  position: absolute;
  left: 0;
  right: 0;
  bottom: 0;
  height: 27px;
  display: flex;
  align-items: center;
  padding-left: 409px;
  gap: 2px;
  background: rgba(45, 45, 45, 0.65);
  color: #fff;
  font-weight: 500;
}

/* 显示设置 */
.side {
  position: relative;
  display: flex;
  flex-direction: column;
  flex: 1;
  min-width: 0;
  background: #fff;
  border-left: 1px solid #ccc;
  border-bottom: 1px solid #ccc;
  box-sizing: border-box;
}
.side-title {
  height: 22px;
  line-height: 22px;
  padding-left: 9px;
  color: #888;
  font-size: 12.500px;
  background: #f4f4f4;
}
.stabs {
  display: flex;
  align-items: flex-end;
  gap: 3px;
  height: 27px;
  padding-left: 3px;
  border-bottom: 1px solid #ddd;
  flex: none;
  box-sizing: border-box;
}
.st {
  width: 60px;
  height: 21px;
  line-height: 21px;
  text-align: center;
  background: #dedede;
  border-radius: 3px 3px 0 0;
  color: #555;
}
.st.on {
  background: #fff;
  height: 23px;
  line-height: 23px;
  color: #1a78e6;
  border: 1px solid #ddd;
  border-bottom: 0;
  box-sizing: border-box;
}
.tt {
  margin: 3px 0 0 3px;
  border-left: 1px solid #ddd;
  flex: 1;
  min-height: 0;
  overflow: hidden;
  width: 260px;
}
.tt-r {
  display: flex;
  height: 21px;
  width: 260px;
  box-sizing: border-box;
  border-bottom: 1px solid #ddd;
}
.tt-r > span {
  display: flex;
  align-items: center;
  box-sizing: border-box;
  border-right: 1px solid #ddd;
  white-space: nowrap;
  position: relative;
}
.tt-r > .t1 {
  padding-top: 1px;
}
.t1 { width: 131px; }
.t2, .t3 { width: 63px; justify-content: center; }
.tt-h > .t1 { padding-left: 43px; }
.leaf {
  padding-left: 41px;
}
.leaf::before {
  content: "";
  position: absolute;
  left: 18px;
  top: -1px;
  bottom: -1px;
  border-left: 1px solid #e2e2e2;
}
.leaf::after {
  content: "";
  position: absolute;
  left: 18px;
  top: 10px;
  width: 16px;
  border-top: 1px solid #e2e2e2;
}
.grp-n {
  padding-left: 12px;
}
.grp-n .small {
  margin-right: 6px;
}
.side-foot {
  display: flex;
  justify-content: flex-end;
  height: 37px;
  padding-top: 5px;
  box-sizing: border-box;
  flex: none;
}
.reset {
  width: 62px;
  padding: 0 0 0 8px;
  height: 26px;
  background: #fff;
  border: 1px solid #ccc;
  border-right: 0;
  border-radius: 3px 0 0 3px;
  font: inherit;
  color: #333;
  white-space: nowrap;
  overflow: hidden;
  text-align: left;
}

/* 状态栏 */
.status {
  display: flex;
  height: 16px;
  padding: 5px 0 0 3px;
  box-sizing: border-box;
  line-height: 20px;
  overflow: hidden;
  flex: none;
  white-space: nowrap;
  background: #fafafa;
}
.s1 { width: 89px; }
.s2 { width: 140px; }
.s3 { width: 110px; }
.s4 { width: 110px; }
.sbtns {
  display: flex;
  gap: 4px;
  margin: -2px 0 0 0;
}
.sb {
  display: block;
  height: 26px;
  box-sizing: border-box;
  border: 1px solid #bbb;
  border-radius: 4px;
  background: #fff;
  padding: 1px 0 0 3px;
}
.sb.act {
  background: #d8e8f9;
  border-color: #5fa0e8;
}
.sb.ml {
  margin-left: 3px;
}
.w22 { width: 22px; }
.w34 { width: 35px; }
.w24 { width: 24px; }

/* 覆盖层 */
.notify {
  position: absolute;
  left: 1253px;
  top: 13px;
  width: 195px;
  height: 34px;
  box-sizing: border-box;
  display: flex;
  align-items: center;
  padding-left: 7px;
  background: #0a8fff;
  color: #fff;
  border-radius: 3px;
}
.notify::after {
  content: "";
  position: absolute;
  left: 100%;
  top: 12px;
  border-left: 6px solid #0a8fff;
  border-top: 5px solid transparent;
  border-bottom: 5px solid transparent;
}
.notify span {
  width: 115px;
}
.notify b {
  font-weight: 400;
  padding: 2px 6px;
  background: #3fa7ff;
  border-radius: 2px;
}
.redmarks {
  position: absolute;
  left: 0;
  top: 0;
  pointer-events: none;
}
.wm {
  position: absolute;
  left: 1629px;
  top: 945px;
  color: rgba(130, 130, 130, 0.55);
  pointer-events: none;
  white-space: nowrap;
}
.wm1 {
  font-size: 20px;
  line-height: 24px;
  letter-spacing: 0.3px;
}
.wm2 {
  font-size: 14px;
  line-height: 24px;
  letter-spacing: 0.2px;
}
</style>
